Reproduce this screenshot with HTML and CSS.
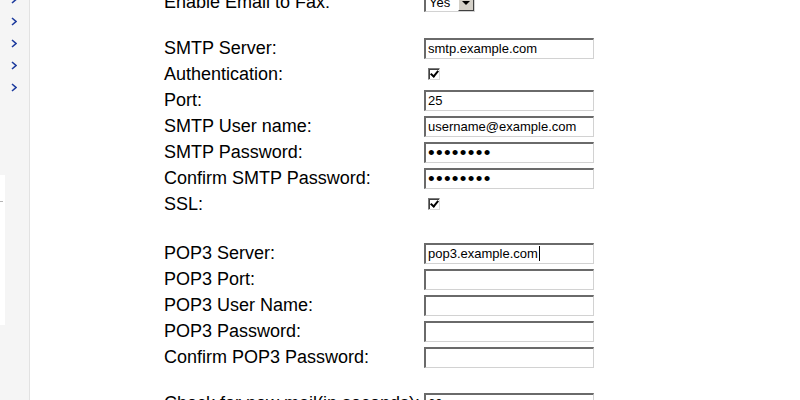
FILE: index.html
```html
<!DOCTYPE html>
<html lang="en">
<head>
  <meta charset="UTF-8" />
  <title>Email to Fax Settings</title>
  <link rel="stylesheet" href="styles.css">
</head>
<body>
  <div class="page">
    <!-- left menu strip -->
    <aside class="side">
      <ul class="nav">
        <li><svg width="6" height="9" viewBox="0 0 6 9"><polyline points="1,1 5,4.5 1,8" /></svg></li>
        <li><svg width="6" height="9" viewBox="0 0 6 9"><polyline points="1,1 5,4.5 1,8" /></svg></li>
        <li><svg width="6" height="9" viewBox="0 0 6 9"><polyline points="1,1 5,4.5 1,8" /></svg></li>
        <li><svg width="6" height="9" viewBox="0 0 6 9"><polyline points="1,1 5,4.5 1,8" /></svg></li>
        <li><svg width="6" height="9" viewBox="0 0 6 9"><polyline points="1,1 5,4.5 1,8" /></svg></li>
      </ul>
      <div class="side-panel"><span class="tick"></span></div>
    </aside>

    <main class="content">
      <form class="settings">
        <div class="row">
          <label>Enable Email to Fax:</label>
          <span class="select">Yes<span class="arrow"></span></span>
        </div>

        <div class="gap"></div>

        <div class="row">
          <label>SMTP Server:</label>
          <input type="text" value="smtp.example.com" />
        </div>
        <div class="row">
          <label>Authentication:</label>
          <input type="checkbox" class="check" checked />
        </div>
        <div class="row">
          <label>Port:</label>
          <input type="text" value="25" />
        </div>
        <div class="row">
          <label>SMTP User name:</label>
          <input type="text" value="username@example.com" />
        </div>
        <div class="row">
          <label>SMTP Password:</label>
          <input type="password" class="pw" value="password" />
        </div>
        <div class="row">
          <label>Confirm SMTP Password:</label>
          <input type="password" class="pw" value="password" />
        </div>
        <div class="row">
          <label>SSL:</label>
          <input type="checkbox" class="check" checked />
        </div>

        <div class="gap gap-wide"></div>

        <div class="row">
          <label>POP3 Server:</label>
          <span class="field">pop3.example.com<span class="caret"></span></span>
        </div>
        <div class="row">
          <label>POP3 Port:</label>
          <input type="text" value="" />
        </div>
        <div class="row">
          <label>POP3 User Name:</label>
          <input type="text" value="" />
        </div>
        <div class="row">
          <label>POP3 Password:</label>
          <input type="password" class="pw" value="" />
        </div>
        <div class="row">
          <label>Confirm POP3 Password:</label>
          <input type="password" class="pw" value="" />
        </div>

        <div class="gap"></div>

        <div class="row">
          <label>Check for new mail(in seconds):</label>
          <input type="text" value="60" />
        </div>
      </form>
    </main>
  </div>
</body>
</html>
```

FILE: styles.css
```css
* {
  box-sizing: border-box;
  margin: 0;
  padding: 0;
}

body {
  background: #ffffff;
  color: #000000;
  font-family: 'Liberation Sans', Arial, sans-serif;
  overflow: hidden;
}

.page {
  display: flex;
  min-height: 400px;
}

/* sidebar */
.side {
  width: 30px;
  flex-shrink: 0;
  background: #f5f5f5;
  border-right: 1px solid #e2e2e2;
}

.nav {
  list-style: none;
  margin-top: -12px;
}

.nav li {
  height: 22px;
  display: flex;
  align-items: center;
  padding-left: 11px;
}

.nav svg polyline {
  fill: none;
  stroke: #1d3b9e;
  stroke-width: 1.6;
}

.side-panel {
  margin-top: 77px;
  width: 5px;
  height: 150px;
  background: #ffffff;
  padding-top: 26px;
}

.tick {
  display: block;
  width: 3px;
  height: 1px;
  background: #b5b5b5;
}

/* form */
.content {
  flex: 1;
  padding-left: 134px;
}

.settings {
  margin-top: -11px;
}

.row {
  display: flex;
  align-items: center;
  height: 26px;
}

.row label {
  width: 260px;
  flex-shrink: 0;
  font-size: 18px;
  white-space: nowrap;
}

.gap {
  height: 20px;
}

.gap-wide {
  height: 23px;
}

input[type="text"],
input[type="password"],
.field {
  width: 170px;
  height: 21px;
  padding: 0 2px;
  font-family: 'Liberation Sans', Arial, sans-serif;
  font-size: 13px;
  color: #000;
  background: #fff;
  border-top: 2px solid #6a6a6a;
  border-left: 2px solid #6a6a6a;
  border-right: 1px solid #d2d2d2;
  border-bottom: 1px solid #d2d2d2;
  outline: none;
}

.field {
  display: flex;
  align-items: center;
}

.caret {
  width: 1px;
  height: 15px;
  margin-left: 1px;
  background: #000;
}

input.pw {
  font-size: 19px;
  letter-spacing: 1.3px;
}

.check {
  appearance: none;
  -webkit-appearance: none;
  width: 12px;
  height: 12px;
  margin-left: 4px;
  background: #fff;
  border-top: 1px solid #7a7a7a;
  border-left: 1px solid #7a7a7a;
  border-right: 1px solid #dcdcdc;
  border-bottom: 1px solid #dcdcdc;
  box-shadow: inset 1px 1px 0 #404040;
  position: relative;
}

.check:checked::after {
  content: "";
  position: absolute;
  left: 3px;
  top: 0px;
  width: 3px;
  height: 6px;
  border-right: 2px solid #000;
  border-bottom: 2px solid #000;
  transform: rotate(40deg);
}

.select {
  display: flex;
  align-items: center;
  width: 51px;
  height: 20px;
  padding-left: 3px;
  font-size: 13px;
  background: #fff;
  border-top: 2px solid #6a6a6a;
  border-left: 2px solid #6a6a6a;
  border-right: 1px solid #d2d2d2;
  border-bottom: 1px solid #d2d2d2;
  justify-content: space-between;
}

.arrow {
  width: 16px;
  height: 16px;
  background: #d4d0c8;
  border-top: 1px solid #ffffff;
  border-left: 1px solid #ffffff;
  border-right: 1px solid #404040;
  border-bottom: 1px solid #404040;
  display: flex;
  align-items: center;
  justify-content: center;
}

.arrow::after {
  content: "";
  border-left: 4px solid transparent;
  border-right: 4px solid transparent;
  border-top: 4px solid #000;
}
```
